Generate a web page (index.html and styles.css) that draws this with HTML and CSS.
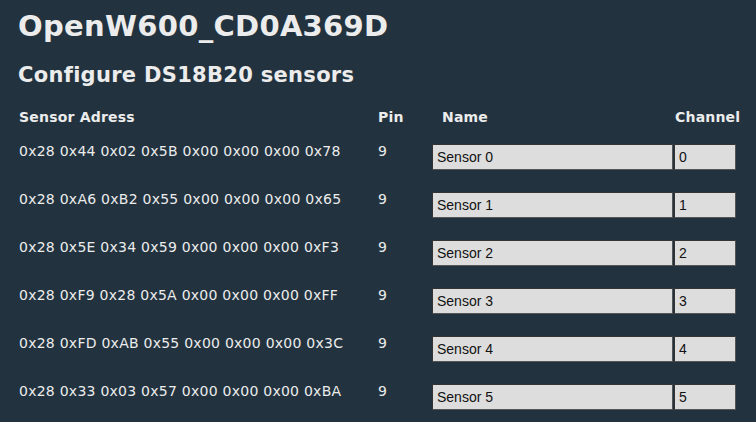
FILE: index.html
```html
<!DOCTYPE html>
<html>
<head>
<meta charset="utf-8">
<link rel="stylesheet" href="styles.css">
</head>
<body>
<h1 class="title">OpenW600_CD0A369D</h1>
<h2 class="subtitle">Configure DS18B20 sensors</h2>
<div class="sensors">
  <div class="hd hd-addr">Sensor Adress</div>
  <div class="hd hd-pin">Pin</div>
  <div class="hd hd-name">Name</div>
  <div class="hd hd-ch">Channel</div>

  <div class="addr">0x28 0x44 0x02 0x5B 0x00 0x00 0x00 0x78</div>
  <div class="pin">9</div>
  <div class="cell"><input class="inp inp-name" type="text" value="Sensor 0"></div>
  <div class="cell"><input class="inp inp-ch" type="text" value="0"></div>

  <div class="addr">0x28 0xA6 0xB2 0x55 0x00 0x00 0x00 0x65</div>
  <div class="pin">9</div>
  <div class="cell"><input class="inp inp-name" type="text" value="Sensor 1"></div>
  <div class="cell"><input class="inp inp-ch" type="text" value="1"></div>

  <div class="addr">0x28 0x5E 0x34 0x59 0x00 0x00 0x00 0xF3</div>
  <div class="pin">9</div>
  <div class="cell"><input class="inp inp-name" type="text" value="Sensor 2"></div>
  <div class="cell"><input class="inp inp-ch" type="text" value="2"></div>

  <div class="addr">0x28 0xF9 0x28 0x5A 0x00 0x00 0x00 0xFF</div>
  <div class="pin">9</div>
  <div class="cell"><input class="inp inp-name" type="text" value="Sensor 3"></div>
  <div class="cell"><input class="inp inp-ch" type="text" value="3"></div>

  <div class="addr">0x28 0xFD 0xAB 0x55 0x00 0x00 0x00 0x3C</div>
  <div class="pin">9</div>
  <div class="cell"><input class="inp inp-name" type="text" value="Sensor 4"></div>
  <div class="cell"><input class="inp inp-ch" type="text" value="4"></div>

  <div class="addr">0x28 0x33 0x03 0x57 0x00 0x00 0x00 0xBA</div>
  <div class="pin">9</div>
  <div class="cell"><input class="inp inp-name" type="text" value="Sensor 5"></div>
  <div class="cell"><input class="inp inp-ch" type="text" value="5"></div>
</div>
</body>
</html>
```

FILE: styles.css
```css
html, body {
  margin: 0;
  padding: 0;
  background: #22333f;
}
body {
  color: #ececec;
  font-family: "DejaVu Sans", Verdana, sans-serif;
  padding: 0 0 0 18px;
  overflow: hidden;
  height: 422px;
}
.title {
  font-size: 29px;
  line-height: 34px;
  font-weight: bold;
  letter-spacing: 0.3px;
  margin: 9px 0 0 0;
}
.subtitle {
  font-size: 21px;
  line-height: 25px;
  font-weight: bold;
  letter-spacing: 0.3px;
  margin: 19.5px 0 0 0;
}
.sensors {
  display: grid;
  grid-template-columns: 359px 54px 242px 62px;
  grid-template-rows: 34px repeat(6, 48px);
  margin: 21px 0 0 1px;
  font-size: 14px;
  line-height: 16px;
}
.sensors .hd {
  font-weight: bold;
  letter-spacing: 0.2px;
}
.hd-name {
  padding-left: 10px;
}
.hd-ch {
  padding-left: 1px;
}
.addr {
  letter-spacing: 0.25px;
}
.cell {
  padding-top: 1.5px;
}
.inp {
  box-sizing: border-box;
  height: 26px;
  margin: 0;
  background: #dddddd;
  border: 1px solid #555;
  border-top-color: #333;
  border-left-color: #333;
  font-family: "Liberation Sans", Arial, sans-serif;
  font-size: 14px;
  color: #111;
  padding: 0 4px;
}
.inp-name {
  width: 241px;
}
.inp-ch {
  width: 62px;
}
```
